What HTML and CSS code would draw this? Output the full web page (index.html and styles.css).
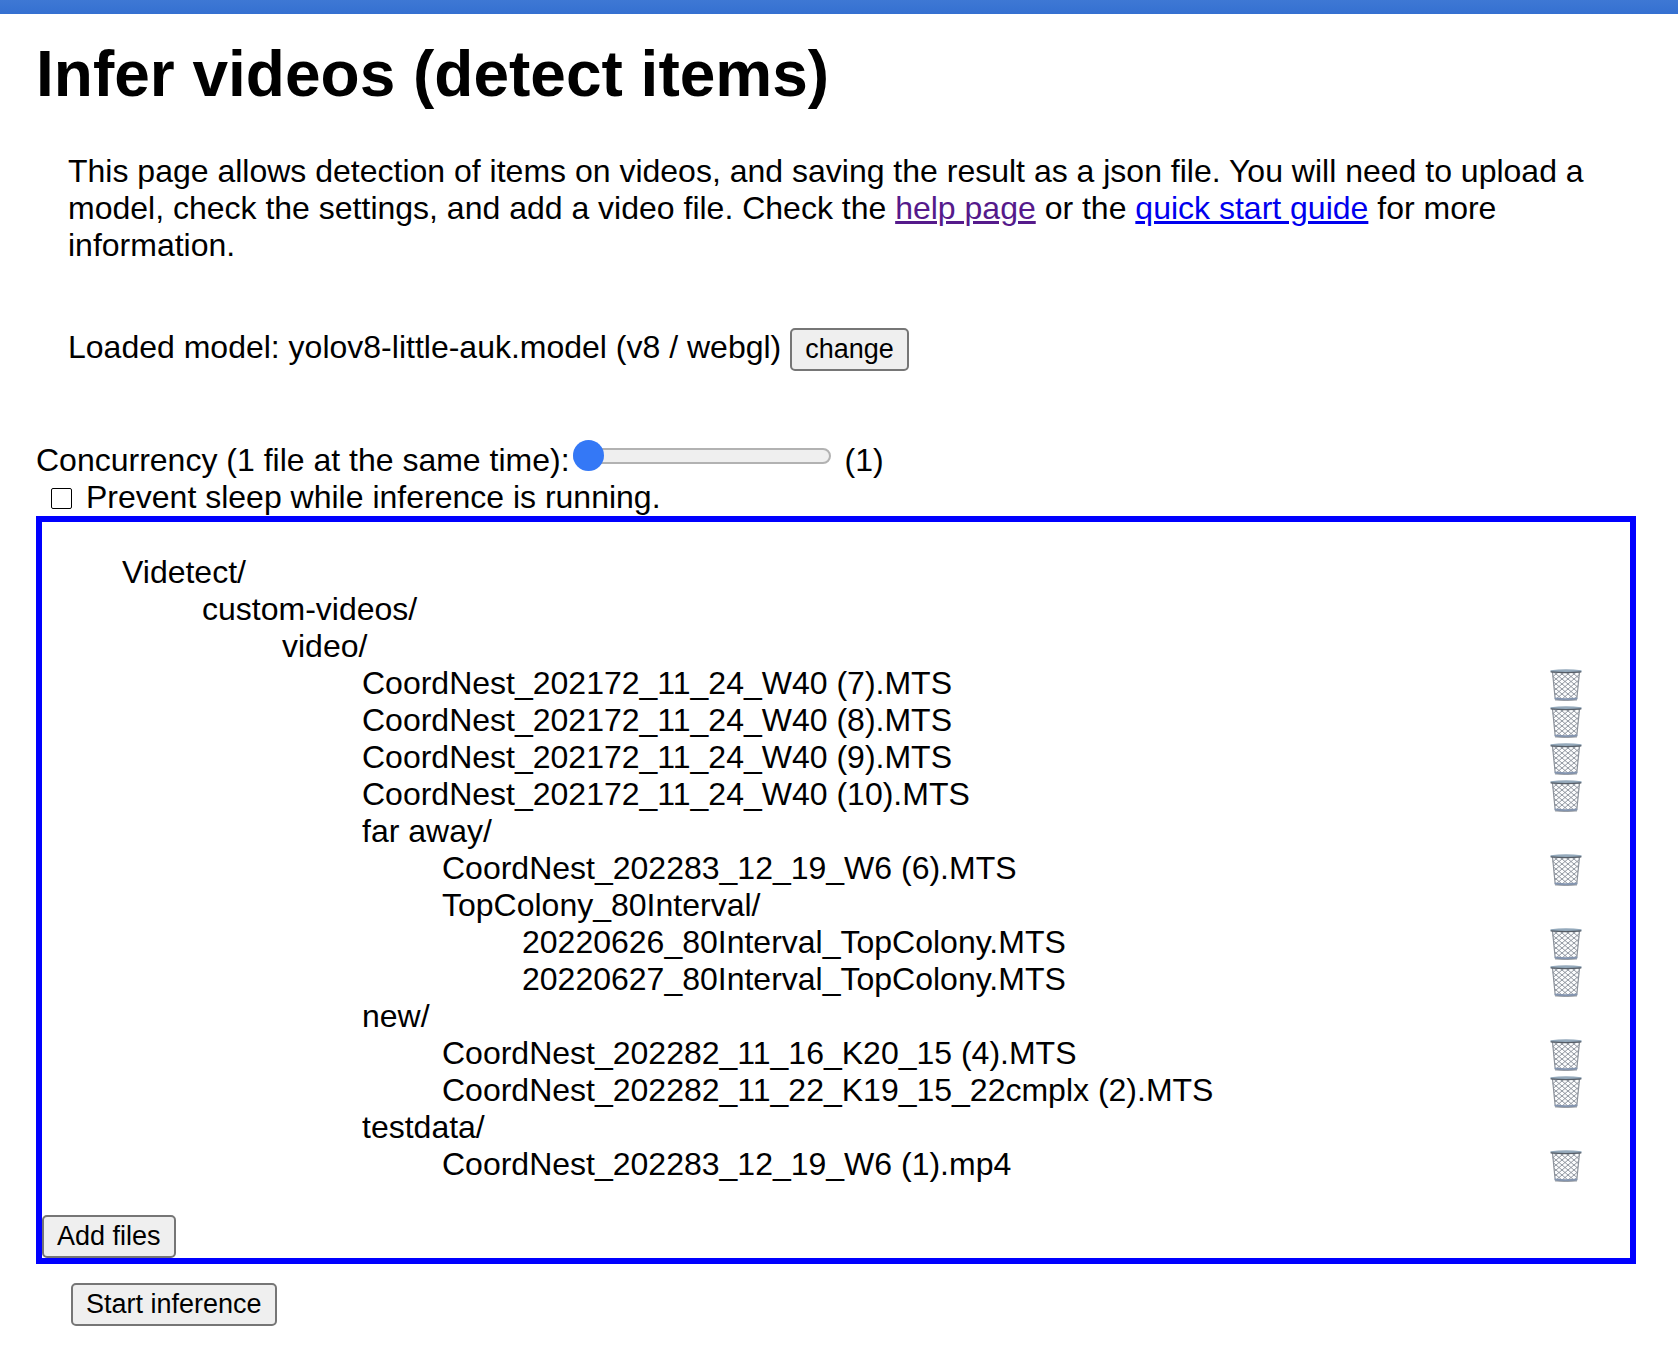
FILE: index.html
```html
<!DOCTYPE html>
<html lang="en">
<head>
<meta charset="utf-8">
<title>Infer videos</title>
<link rel="stylesheet" href="styles.css">
</head>
<body>
<svg class="symbols" aria-hidden="true">
  <defs>
    <pattern id="mesh" width="6" height="5" patternUnits="userSpaceOnUse">
      <path d="M0 0 3 2.500 0 5M6 0 3 2.500 6 5" fill="none" stroke="#858b95" stroke-width=".9"/>
    </pattern>
    <symbol id="bin" viewBox="0 0 32 32">
      <path d="M2 3h28l-3.500 27q-10.500 2-21 0z" fill="#fbfcfd"/>
      <path d="M2 3h28l-3.500 27q-10.500 2-21 0z" fill="url(#mesh)"/>
      <path d="M2.500 3 5.200 30M29.500 3l-2.700 27" fill="none" stroke="#8c929b" stroke-width="1.200"/>
      <path d="M4.800 28.500q11.200 1.500 22.400 0v2.300q-11.200 1.600-22.400 0z" fill="#8495b0"/>
      <path d="M5 31q11 1.200 22 0" fill="none" stroke="#8b8f95" stroke-width=".8"/>
      <path d="M.5 1.200q15.500-1.800 31 0V3q-15.500 1.500-31 0z" fill="#94a9bb"/>
      <path d="M.7 2.800q15.300 1.500 30.600 0" fill="none" stroke="#565d66" stroke-width="1.200"/>
    </symbol>
  </defs>
</svg>
<header class="topbar"></header>
<main class="page">
  <h1 class="title">Infer videos (detect items)</h1>
  <p class="intro">This page allows detection of items on videos, and saving the result as a json file. You will need to upload a model, check the settings, and add a video file. Check the <a class="visited" href="#help">help page</a> or the <a href="#guide">quick start guide</a> for more information.</p>
  <div class="model">
    <span>Loaded model: yolov8-little-auk.model (v8 / webgl)</span>
    <button type="button">change</button>
  </div>
  <div class="concurrency">
    <label for="concurrency">Concurrency (1 file at the same time):</label>
    <input class="slider" id="concurrency" type="range" min="1" max="4" value="1">
    <output for="concurrency">(1)</output>
  </div>
  <div class="sleep">
    <input class="check" id="sleep" type="checkbox">
    <label for="sleep">Prevent sleep while inference is running.</label>
  </div>
  <section class="files">
    <ul class="tree">
      <li>Videtect/
        <ul>
          <li>custom-videos/
            <ul>
              <li>video/
                <ul>
                  <li class="file">CoordNest_202172_11_24_W40 (7).MTS <button class="remove" type="button" aria-label="Remove"><svg><use href="#bin"/></svg></button></li>
                  <li class="file">CoordNest_202172_11_24_W40 (8).MTS <button class="remove" type="button" aria-label="Remove"><svg><use href="#bin"/></svg></button></li>
                  <li class="file">CoordNest_202172_11_24_W40 (9).MTS <button class="remove" type="button" aria-label="Remove"><svg><use href="#bin"/></svg></button></li>
                  <li class="file">CoordNest_202172_11_24_W40 (10).MTS <button class="remove" type="button" aria-label="Remove"><svg><use href="#bin"/></svg></button></li>
                  <li>far away/
                    <ul>
                      <li class="file">CoordNest_202283_12_19_W6 (6).MTS <button class="remove" type="button" aria-label="Remove"><svg><use href="#bin"/></svg></button></li>
                      <li>TopColony_80Interval/
                        <ul>
                          <li class="file">20220626_80Interval_TopColony.MTS <button class="remove" type="button" aria-label="Remove"><svg><use href="#bin"/></svg></button></li>
                          <li class="file">20220627_80Interval_TopColony.MTS <button class="remove" type="button" aria-label="Remove"><svg><use href="#bin"/></svg></button></li>
                        </ul>
                      </li>
                    </ul>
                  </li>
                  <li>new/
                    <ul>
                      <li class="file">CoordNest_202282_11_16_K20_15 (4).MTS <button class="remove" type="button" aria-label="Remove"><svg><use href="#bin"/></svg></button></li>
                      <li class="file">CoordNest_202282_11_22_K19_15_22cmplx (2).MTS <button class="remove" type="button" aria-label="Remove"><svg><use href="#bin"/></svg></button></li>
                    </ul>
                  </li>
                  <li>testdata/
                    <ul>
                      <li class="file">CoordNest_202283_12_19_W6 (1).mp4 <button class="remove" type="button" aria-label="Remove"><svg><use href="#bin"/></svg></button></li>
                    </ul>
                  </li>
                </ul>
              </li>
            </ul>
          </li>
        </ul>
      </li>
    </ul>
    <button type="button">Add files</button>
  </section>
  <button class="start" type="button">Start inference</button>
</main>
</body>
</html>
```

FILE: styles.css
```css
* {
  box-sizing: border-box;
}

body {
  margin: 0;
  background: #fff;
  color: #000;
  font: 32px/37px "Liberation Sans", Arial, sans-serif;
}

.symbols {
  position: absolute;
  width: 0;
  height: 0;
}

.topbar {
  height: 14px;
  background: linear-gradient(#3e78d4, #3570d1);
}

.page {
  padding: 23px 42px 42px 36px;
}

.title {
  margin: 0;
  font-size: 64px;
  line-height: 74px;
}

.intro {
  margin: 0;
  padding: 42px 32px 64px;
}

a {
  color: #00e;
  text-decoration-thickness: 3px;
}

a.visited {
  color: #551a8b;
}

button {
  height: 43px;
  padding: 0 13px;
  border: 2px solid #767676;
  border-radius: 5px;
  background: #efefef;
  color: #000;
  font: 27px/31px "Liberation Sans", Arial, sans-serif;
}

.model {
  display: flex;
  align-items: baseline;
  gap: 9px;
  padding: 0 32px 71px;
}

.concurrency {
  display: flex;
  gap: 3px;
  height: 37px;
}

.slider {
  width: 258px;
  height: 31px;
  margin: -2px 11px 0 0;
  appearance: none;
  background: none;
}

.slider::-webkit-slider-runnable-track {
  height: 16px;
  border: 2px solid #b2b2b2;
  border-radius: 8px;
  background: #efefef;
}

.slider::-webkit-slider-thumb {
  appearance: none;
  width: 31px;
  height: 31px;
  margin: -10px 0 0 -2px;
  border-radius: 50%;
  background: #3478f6;
}

.sleep {
  display: flex;
  align-items: center;
  gap: 14px;
  padding-left: 15px;
}

.check {
  appearance: none;
  width: 21px;
  height: 21px;
  margin: 2px 0 0;
  border: 1px solid #000;
  border-radius: 2px;
}

.files {
  display: flow-root;
  border: 6px solid #00f;
}

.tree {
  margin: 32px 0;
  padding-right: 48px;
}

ul {
  margin: 0;
  padding: 0 0 0 80px;
  list-style: none;
}

.file {
  display: flex;
  justify-content: space-between;
}

.remove {
  width: 32px;
  height: 37px;
  padding: 0;
  border: 0;
  background: none;
}

.remove svg {
  display: block;
  width: 32px;
  height: 32px;
  margin-top: 2px;
}

.files > button {
  display: block;
}

.start {
  display: block;
  margin: 19px 0 0 35px;
}
```
